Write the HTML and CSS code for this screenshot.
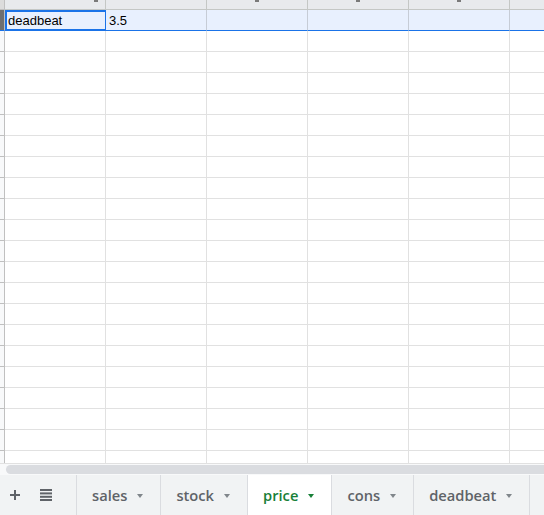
FILE: index.html
```html
<!DOCTYPE html>
<html>
<head>
<meta charset="utf-8">
<link rel="stylesheet" href="styles.css">
</head>
<body>
<div class="sheet">
  <div class="grid">
    <div class="rh corner"></div>
    <div class="ch"><span class="mark m-a"></span></div>
    <div class="ch"></div>
    <div class="ch"><span class="mark"></span></div>
    <div class="ch"><span class="mark"></span></div>
    <div class="ch"><span class="mark"></span></div>
    <div class="ch"></div>

    <div class="rh sel-rh"></div>
    <div class="c sel active">deadbeat</div>
    <div class="c sel">3.5</div>
    <div class="c sel"></div>
    <div class="c sel"></div>
    <div class="c sel"></div>
    <div class="c sel"></div>
  </div>
  <div class="rows" id="rows"></div>
  <div class="hscroll"><div class="thumb"></div></div>
  <div class="tabs">
    <div class="tool">
      <svg width="10" height="10" viewBox="0 0 10 10"><rect x="4" y="0" width="2" height="10" fill="#5f6368"/><rect x="0" y="4" width="10" height="2" fill="#5f6368"/></svg>
    </div>
    <div class="tool">
      <svg width="12" height="12" viewBox="0 0 12 12"><rect x="0" y="0" width="12" height="2" fill="#5f6368"/><rect x="0" y="3.4" width="12" height="2" fill="#5f6368"/><rect x="0" y="6.8" width="12" height="2" fill="#5f6368"/><rect x="0" y="10" width="12" height="2" fill="#5f6368"/></svg>
    </div>
    <div class="tab first">sales<span class="tri"></span></div>
    <div class="tab">stock<span class="tri"></span></div>
    <div class="tab on">price<span class="tri"></span></div>
    <div class="tab">cons<span class="tri"></span></div>
    <div class="tab">deadbeat<span class="tri"></span></div>
  </div>
</div>
<script src="app.js"></script>
</body>
</html>
```

FILE: app.js
```js
var rows = document.getElementById('rows');
var html = '';
for (var r = 0; r < 21; r++) {
  html += '<div class="rh"></div>';
  for (var c = 0; c < 6; c++) html += '<div class="c"></div>';
}
rows.innerHTML = html;
```

FILE: styles.css
```css
html, body {
  margin: 0;
  padding: 0;
  background: #fff;
}
.sheet {
  width: 544px;
  height: 515px;
  overflow: hidden;
  display: flex;
  flex-direction: column;
  font-family: "Liberation Sans", Arial, sans-serif;
}
.grid, .rows {
  display: grid;
  grid-template-columns: 5px repeat(6, 101px);
  flex: none;
}
.grid {
  grid-template-rows: 10px 21px;
}
.rows {
  grid-auto-rows: 21px;
  height: 432px;
  overflow: hidden;
}
.rh {
  box-sizing: border-box;
  background: #f8f9fa;
  border-right: 1px solid #c0c0c0;
  border-bottom: 1px solid #c0c0c0;
}
.corner {
  background: #dcdcdc;
}
.sel-rh {
  background: #6f6f6f;
  border-bottom: 1px solid #1a73e8;
}
.ch {
  box-sizing: border-box;
  background: #e8eaed;
  border-right: 1px solid #c4c7c5;
  border-bottom: 1px solid #c4c7c5;
  position: relative;
}
.mark {
  position: absolute;
  left: 48px;
  top: 0;
  width: 4px;
  height: 2px;
  background: #7a7a7a;
}
.m-a {
  left: 89px;
}
.c {
  box-sizing: border-box;
  border-right: 1px solid #e1e1e1;
  border-bottom: 1px solid #e1e1e1;
  font-size: 13px;
  color: #000;
  padding: 0 0 0 3px;
  line-height: 21px;
  white-space: nowrap;
}
.c.sel {
  background: #e8f0fe;
  border-right-color: #c6ccd6;
  border-bottom: 1px solid #1a73e8;
}
.c.active {
  border: 2px solid #1a73e8;
  line-height: 17px;
  padding-left: 1px;
  margin-right: -1px;
}
.hscroll {
  flex: none;
  height: 12px;
  box-sizing: border-box;
  border-top: 1px solid #e1e1e1;
  background: #f8f9fa;
  padding: 1px 0 0 6px;
}
.thumb {
  height: 9px;
  background: #dadce0;
  border-radius: 5px 0 0 5px;
}
.tabs {
  flex: 1;
  background: #f1f3f4;
  display: flex;
  align-items: stretch;
  font-family: "Open Sans", "Liberation Sans", sans-serif;
  font-weight: 600;
  font-size: 14.7px;
  color: #5f6368;
}
.tool {
  width: 30px;
  display: flex;
  align-items: center;
  justify-content: center;
}
.tool + .tool {
  width: 31px;
  margin-right: 15px;
}
.tab {
  display: flex;
  align-items: center;
  gap: 10px;
  padding: 0 17px 0 15px;
  border-right: 1px solid #dadce0;
}
.tab.first {
  border-left: 1px solid #dadce0;
}
.tab.on {
  background: #fff;
  color: #188038;
}
.tri {
  width: 0;
  height: 0;
  border-left: 3.5px solid transparent;
  border-right: 3.5px solid transparent;
  border-top: 4px solid #80868b;
  margin-top: 1px;
}
.tab.on .tri {
  border-top-color: #188038;
}
```
